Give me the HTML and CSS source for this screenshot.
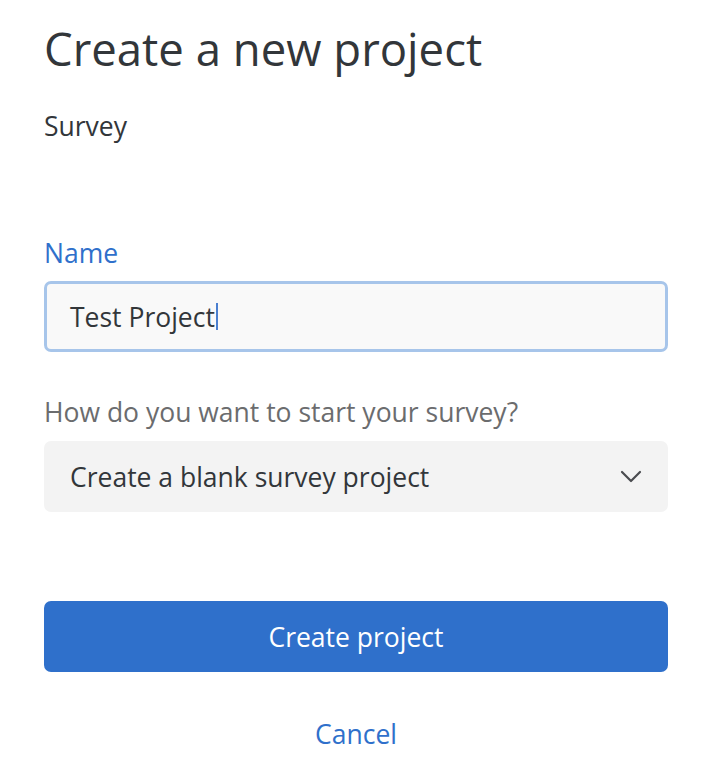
FILE: index.html
```html
<!DOCTYPE html>
<html lang="en">
<head>
<meta charset="utf-8">
<title>Create a new project</title>
<link rel="stylesheet" href="styles.css">
</head>
<body>
<main class="dialog">
  <h1 class="title">Create a new project</h1>
  <p class="type">Survey</p>
  <label class="field-label" for="name">Name</label>
  <div class="text-input" id="name">Test Project<span class="caret"></span></div>
  <p class="question">How do you want to start your survey?</p>
  <div class="select">
    <span>Create a blank survey project</span>
    <svg class="chevron" width="22" height="13" viewBox="0 0 22 13" aria-hidden="true">
      <path d="M2 2 L11 11 L20 2" fill="none" stroke="#4a4c50" stroke-width="2.2" stroke-linecap="round" stroke-linejoin="round"/>
    </svg>
  </div>
  <button class="primary">Create project</button>
  <a class="cancel" href="#">Cancel</a>
</main>
</body>
</html>
```

FILE: styles.css
```css
* { box-sizing: border-box; }
html, body { margin: 0; padding: 0; background: #ffffff; }
body {
  font-family: "Open Sans", "Noto Sans", sans-serif;
  color: #32363a;
}
.dialog {
  display: flex;
  flex-direction: column;
  padding: 26px 42px 0 44px;
}
.title {
  margin: 0;
  font-size: 45.5px;
  line-height: 45px;
  font-weight: 400;
  color: #32363a;
}
.type {
  margin: 42px 0 0;
  font-size: 26.5px;
  line-height: 26px;
}
.field-label {
  margin-top: 101px;
  font-size: 26.5px;
  line-height: 26px;
  color: #2f70cb;
}
.text-input {
  margin-top: 15px;
  height: 71px;
  border: 3px solid #a7c5ea;
  border-radius: 7px;
  background: #f9f9f9;
  padding: 0 23px;
  display: flex;
  align-items: center;
  font-size: 26.5px;
  line-height: 26px;
  color: #32363a;
}
.caret {
  display: inline-block;
  width: 2px;
  height: 27px;
  margin-left: 1px;
  background: #4a7fd0;
}
.question {
  margin: 47px 0 0;
  font-size: 26.5px;
  line-height: 26px;
  color: #6b6c6e;
}
.select {
  margin-top: 16px;
  height: 71px;
  border-radius: 7px;
  background: #f3f3f3;
  padding: 0 26px 0 26px;
  display: flex;
  align-items: center;
  justify-content: space-between;
  font-size: 26.5px;
  line-height: 26px;
  color: #32363a;
}
.chevron { display: block; }
.primary {
  margin-top: 89px;
  height: 71px;
  border: 0;
  border-radius: 7px;
  background: #2f70cb;
  color: #ffffff;
  font-family: inherit;
  font-size: 26.5px;
  line-height: 26px;
  cursor: pointer;
}
.cancel {
  margin-top: 49px;
  align-self: center;
  font-size: 26.5px;
  line-height: 26px;
  color: #2f70cb;
  text-decoration: none;
}
```
